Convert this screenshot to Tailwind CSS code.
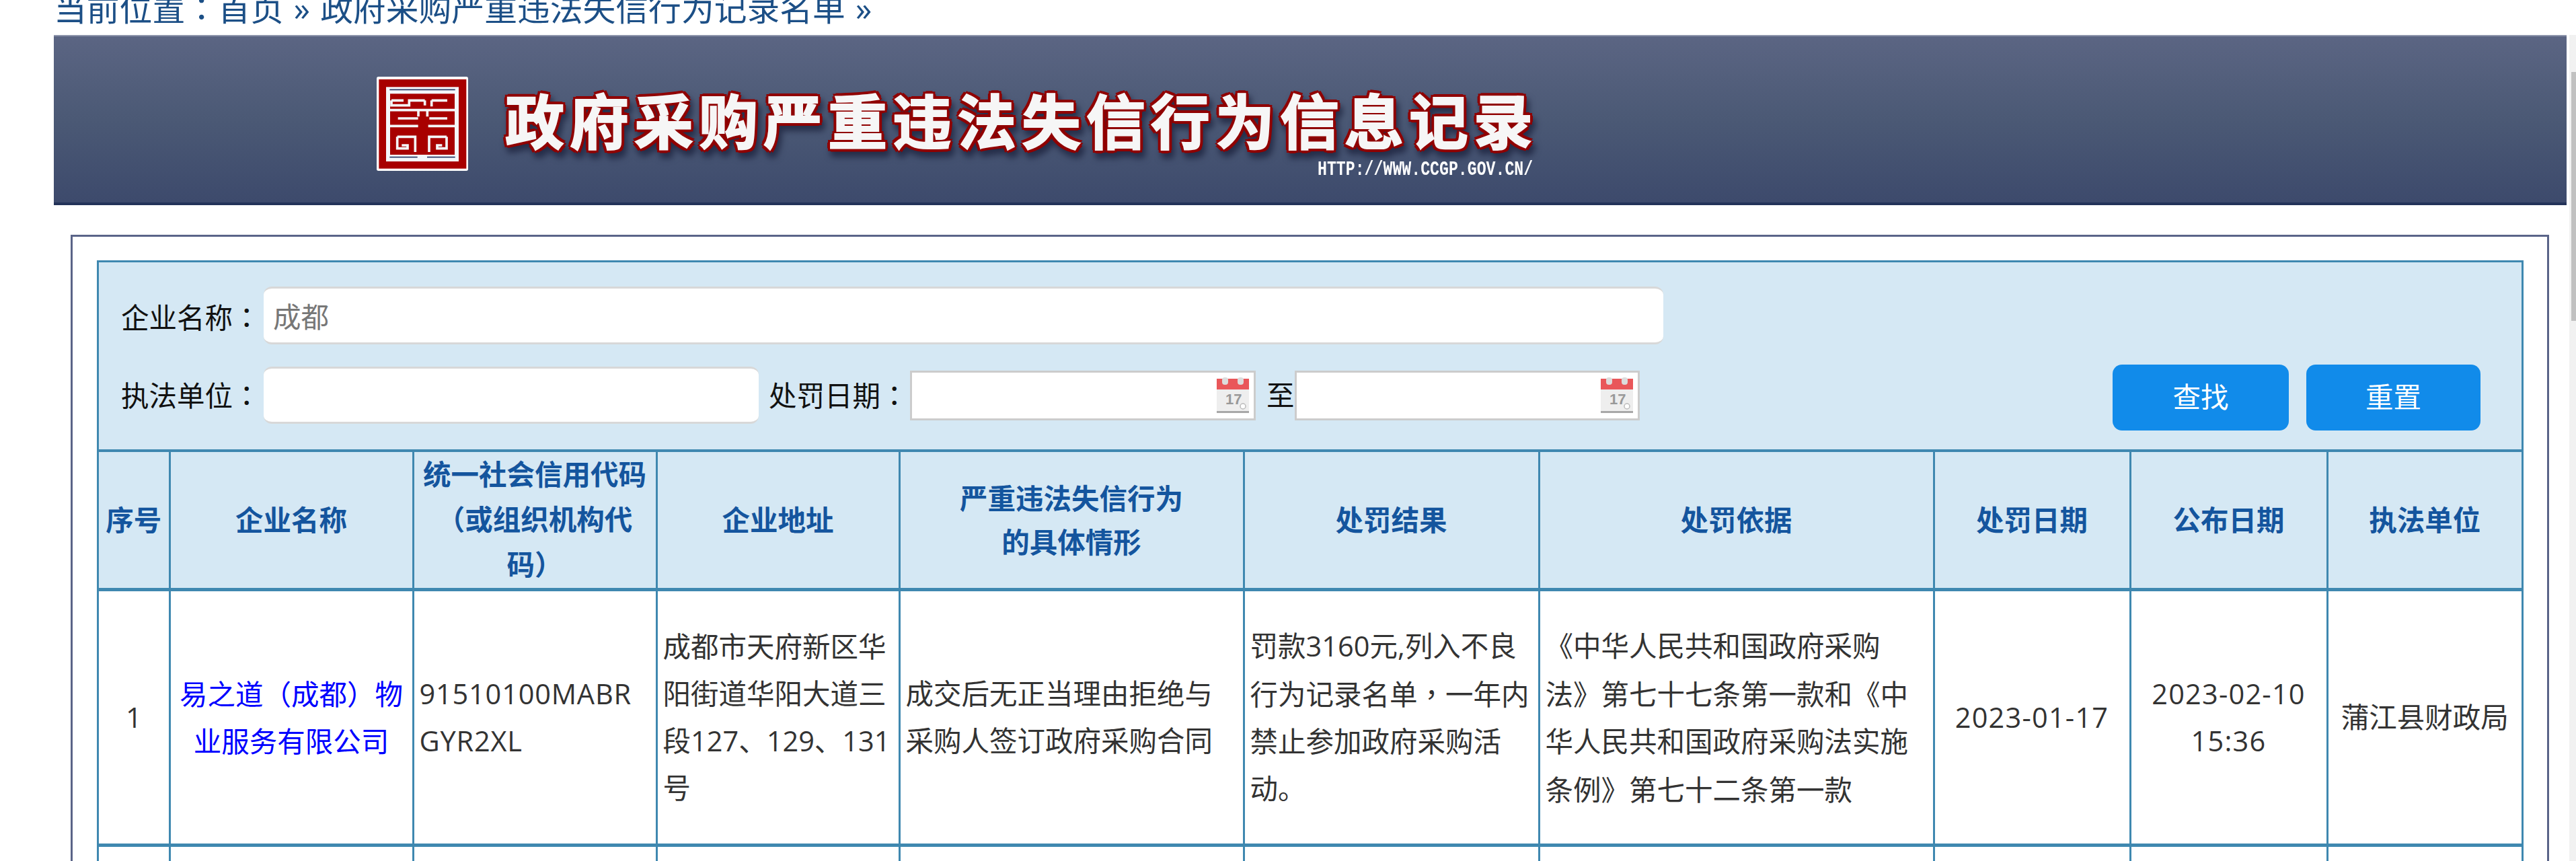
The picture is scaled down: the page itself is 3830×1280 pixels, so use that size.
<!DOCTYPE html>
<html>
<head>
<meta charset="utf-8">
<title>政府采购严重违法失信行为信息记录</title>
<script src="https://cdn.jsdelivr.net/npm/@tailwindcss/browser@4"></script>
</head>
<body class="relative h-[1280px] w-[3830px] overflow-hidden bg-white font-['Open_Sans','Noto_Sans_CJK_SC',sans-serif] text-[41.5px] text-[#333]">
  <div class="absolute right-0 top-[52px] bottom-0 w-[10px] bg-[#f1f1f1]">
    <div class="absolute right-0 top-[55px] h-[370px] w-[7px] bg-[#c1c1c1]"></div>
  </div>

  <div class="flex h-[52px] items-end overflow-hidden pb-[10px] pl-[80px] text-[48.8px] leading-[60px] [word-spacing:2.5px] whitespace-nowrap text-[#1c4f86]"><span>当前位置<span class="font-['Noto_Sans_CJK_TC',sans-serif]">：</span>首页 » 政府采购严重违法失信行为记录名单 »</span></div>

  <header class="ml-[80px] flex h-[253px] w-[3736px] border-t-2 border-b-[4px] border-t-[#8d94aa] border-b-[#233359] bg-gradient-to-b from-[#5b6583] via-[#4b5975] to-[#3d4a6c]">
    <div class="ml-[480px] mt-[60px] h-[140px] w-[136px] shrink-0">
      <svg viewBox="180 72 408 420" class="h-full w-full" fill="none">
        <rect x="180" y="72" width="408" height="420" rx="8" fill="#ffffff"/>
        <rect x="190" y="84" width="390" height="398" fill="#a80000"/>
        <rect x="222" y="118" width="324" height="332" fill="#f4f6fa"/>
        <rect x="240" y="148" width="288" height="272" fill="#a80000"/>
        <path d="M238 130H530M238 431H362M405 431H530" stroke="#2c3a66" stroke-width="5"/>
        <g stroke="#f4f6fa" stroke-width="11">
          <path d="M246 178H300M246 178V200H325V178H395M395 178V200M425 178H495M425 178V205"/>
          <path d="M240 221H528"/>
          <path d="M275 258H365M415 258H495"/>
          <path d="M240 292H365M410 292H528"/>
          <path d="M272 340H352V408M272 340V392H318V378H292"/>
          <path d="M492 340H414V408M492 340V392H450V378H472"/>
          <path d="M406 225V250M366 225V250"/>
        </g>
      </svg>
    </div>
    <div class="relative ml-[54px] w-[1560px]">
      <div class="absolute left-[1px] top-[67px] whitespace-nowrap font-['Noto_Sans_CJK_SC',sans-serif] text-[88px] leading-[110px] font-bold tracking-[8px] text-[#f6f6f6] [-webkit-text-stroke:2px_#f6f6f6] [text-shadow:5px_0_0_#900000,-5px_0_0_#900000,0_5px_0_#900000,0_-5px_0_#900000,4px_4px_0_#900000,-4px_4px_0_#900000,4px_-4px_0_#900000,-4px_-4px_0_#900000] drop-shadow-[4px_8px_5px_rgba(20,25,50,0.65)]">政府采购严重违法失信行为信息记录</div>
      <div class="absolute left-[1209px] top-[183px] origin-left scale-x-[0.8] whitespace-nowrap font-['Liberation_Mono',monospace] text-[29px] leading-[32px] font-bold text-white">HTTP://WWW.CCGP.GOV.CN/</div>
    </div>
  </header>

  <main class="ml-[105px] mt-[44px] h-[1000px] w-[3685px] border-[3px] border-[#5a6488] pt-[35px] pl-[36px]">
    <div class="h-[960px] w-[3608px] border-[3px] border-[#3f88b0]">
      <form class="h-[278px] bg-[#d5e8f4] pt-[36px] text-[#111]">
        <div class="flex h-[86px] items-center">
          <label class="ml-[33px] w-[212px] pt-[4px] whitespace-nowrap">企业名称<span class="font-['Noto_Sans_CJK_TC',sans-serif]">：</span></label>
          <div class="flex h-[86px] w-[2081px] items-center rounded-[12px] border-t-[3px] border-b-[3px] border-[#d8d8d8] bg-white pt-[4px] pl-[14px] text-[#777]">成都</div>
        </div>
        <div class="relative mt-[33px] flex h-[85px] items-center">
          <label class="ml-[33px] w-[212px] whitespace-nowrap">执法单位<span class="font-['Noto_Sans_CJK_TC',sans-serif]">：</span></label>
          <div class="h-[85px] w-[736px] rounded-[12px] border-t-[3px] border-b-[3px] border-[#d8d8d8] bg-white"></div>
          <label class="ml-[15px] w-[210px] whitespace-nowrap">处罚日期<span class="font-['Noto_Sans_CJK_TC',sans-serif]">：</span></label>
          <div class="flex h-[74px] w-[514px] items-center justify-end border-[3px] border-[#cccccc] bg-white pr-[7px]">
            <svg viewBox="0 0 48 53" class="h-[53px] w-[48px]">
              <rect y="2" width="48" height="51" fill="#eeeeee"/>
              <rect y="2" width="48" height="16" fill="#e9575a"/>
              <rect x="8" y="0" width="9" height="11" rx="4" fill="#dcdcdc"/>
              <rect x="31" y="0" width="9" height="11" rx="4" fill="#dcdcdc"/>
              <rect y="50" width="48" height="3" fill="#a8a8a8"/>
              <text x="13" y="40" font-size="22" font-weight="700" fill="#999" font-family="Liberation Sans">17</text>
              <circle cx="39" cy="43" r="4" fill="#fff" stroke="#bbb" stroke-width="1.5"/>
            </svg>
          </div>
          <label class="ml-[16px] w-[42px] whitespace-nowrap">至</label>
          <div class="flex h-[74px] w-[513px] items-center justify-end border-[3px] border-[#cccccc] bg-white pr-[7px]">
            <svg viewBox="0 0 48 53" class="h-[53px] w-[48px]">
              <rect y="2" width="48" height="51" fill="#eeeeee"/>
              <rect y="2" width="48" height="16" fill="#e9575a"/>
              <rect x="8" y="0" width="9" height="11" rx="4" fill="#dcdcdc"/>
              <rect x="31" y="0" width="9" height="11" rx="4" fill="#dcdcdc"/>
              <rect y="50" width="48" height="3" fill="#a8a8a8"/>
              <text x="13" y="40" font-size="22" font-weight="700" fill="#999" font-family="Liberation Sans">17</text>
              <circle cx="39" cy="43" r="4" fill="#fff" stroke="#bbb" stroke-width="1.5"/>
            </svg>
          </div>
          <button type="button" class="absolute left-[2994px] top-[-3px] h-[98px] w-[262px] rounded-[14px] bg-[#118bea] pb-[2px] text-white">查找</button>
          <button type="button" class="absolute left-[3282px] top-[-3px] h-[98px] w-[259px] rounded-[14px] bg-[#118bea] pb-[2px] text-white">重置</button>
        </div>
      </form>

      <table class="w-[3602px] table-fixed border-collapse leading-[70px]">
        <colgroup>
          <col class="w-[105px]"><col class="w-[362px]"><col class="w-[362px]"><col class="w-[361px]"><col class="w-[512px]"><col class="w-[439px]"><col class="w-[587px]"><col class="w-[292px]"><col class="w-[293px]"><col class="w-[289px]">
        </colgroup>
        <thead class="bg-[#d5e8f4] text-center leading-[65px] font-bold text-[#14559e]">
          <tr class="h-[206px]">
            <th class="border-[3px] border-l-0 border-t-[4px] border-b-[5px] border-[#3f88b0] pt-[2px] font-bold whitespace-nowrap">序号</th>
            <th class="border-[3px] border-t-[4px] border-b-[5px] border-[#3f88b0] pt-[2px] font-bold">企业名称</th>
            <th class="border-[3px] border-t-[4px] border-b-[5px] border-[#3f88b0] px-0 font-bold whitespace-nowrap">统一社会信用代码<br><span class="font-['Noto_Sans_CJK_TC',sans-serif]">（</span>或组织机构代<br>码<span class="font-['Noto_Sans_CJK_TC',sans-serif]">）</span></th>
            <th class="border-[3px] border-t-[4px] border-b-[5px] border-[#3f88b0] pt-[2px] font-bold">企业地址</th>
            <th class="border-[3px] border-t-[4px] border-b-[5px] border-[#3f88b0] pt-[2px] font-bold">严重违法失信行为<br>的具体情形</th>
            <th class="border-[3px] border-t-[4px] border-b-[5px] border-[#3f88b0] pt-[2px] font-bold">处罚结果</th>
            <th class="border-[3px] border-t-[4px] border-b-[5px] border-[#3f88b0] pt-[2px] font-bold">处罚依据</th>
            <th class="border-[3px] border-t-[4px] border-b-[5px] border-[#3f88b0] pt-[2px] font-bold">处罚日期</th>
            <th class="border-[3px] border-t-[4px] border-b-[5px] border-[#3f88b0] pt-[2px] font-bold">公布日期</th>
            <th class="border-[3px] border-r-0 border-t-[4px] border-b-[5px] border-[#3f88b0] pt-[2px] font-bold">执法单位</th>
          </tr>
        </thead>
        <tbody>
          <tr class="h-[380px]">
            <td class="border-[3px] border-l-0 border-b-[5px] border-[#3f88b0] text-center">1</td>
            <td class="border-[3px] border-b-[5px] border-[#3f88b0] text-center whitespace-nowrap"><a href="#" class="text-[#0000ff]">易之道<span class="font-['Noto_Sans_CJK_TC',sans-serif]">（</span>成都<span class="font-['Noto_Sans_CJK_TC',sans-serif]">）</span>物<br>业服务有限公司</a></td>
            <td class="border-[3px] border-b-[5px] border-[#3f88b0] pl-[8px] tracking-[0.8px] whitespace-nowrap">91510100MABR<br>GYR2XL</td>
            <td class="border-[3px] border-b-[5px] border-[#3f88b0] pl-[8px] whitespace-nowrap">成都市天府新区华<br>阳街道华阳大道三<br>段127、129、131<br>号</td>
            <td class="border-[3px] border-b-[5px] border-[#3f88b0] pl-[8px] whitespace-nowrap">成交后无正当理由拒绝与<br>采购人签订政府采购合同</td>
            <td class="border-[3px] border-b-[5px] border-[#3f88b0] pl-[8px] whitespace-nowrap">罚款3160元,列入不良<br>行为记录名单<span class="font-['Noto_Sans_CJK_TC',sans-serif]">，</span>一年内<br>禁止参加政府采购活<br>动。</td>
            <td class="border-[3px] border-b-[5px] border-[#3f88b0] pl-[8px] whitespace-nowrap"><span class="font-['Noto_Sans_CJK_TC',sans-serif]">《</span>中华人民共和国政府采购<br>法<span class="font-['Noto_Sans_CJK_TC',sans-serif]">》</span>第七十七条第一款和<span class="font-['Noto_Sans_CJK_TC',sans-serif]">《</span>中<br>华人民共和国政府采购法实施<br>条例<span class="font-['Noto_Sans_CJK_TC',sans-serif]">》</span>第七十二条第一款</td>
            <td class="border-[3px] border-b-[5px] border-[#3f88b0] text-center tracking-[1.2px] whitespace-nowrap">2023-01-17</td>
            <td class="border-[3px] border-b-[5px] border-[#3f88b0] text-center tracking-[1.2px] whitespace-nowrap">2023-02-10<br>15:36</td>
            <td class="border-[3px] border-r-0 border-b-[5px] border-[#3f88b0] text-center whitespace-nowrap">蒲江县财政局</td>
          </tr>
          <tr class="h-[120px]">
            <td class="border-[3px] border-l-0 border-[#3f88b0]"></td>
            <td class="border-[3px] border-[#3f88b0]"></td>
            <td class="border-[3px] border-[#3f88b0]"></td>
            <td class="border-[3px] border-[#3f88b0]"></td>
            <td class="border-[3px] border-[#3f88b0]"></td>
            <td class="border-[3px] border-[#3f88b0]"></td>
            <td class="border-[3px] border-[#3f88b0]"></td>
            <td class="border-[3px] border-[#3f88b0]"></td>
            <td class="border-[3px] border-[#3f88b0]"></td>
            <td class="border-[3px] border-r-0 border-[#3f88b0]"></td>
          </tr>
        </tbody>
      </table>
    </div>
  </main>
</body>
</html>
